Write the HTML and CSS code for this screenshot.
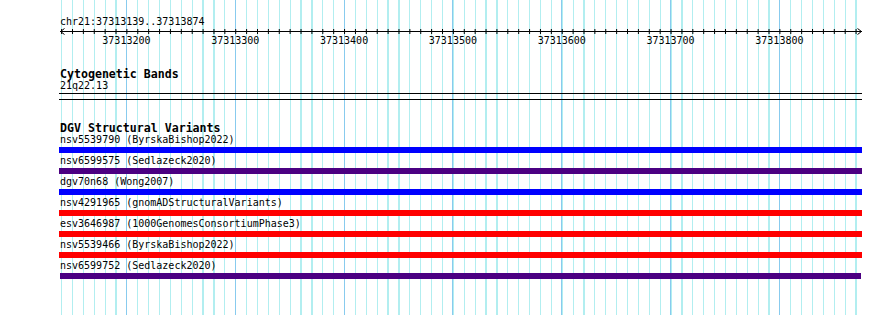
FILE: index.html
```html
<!DOCTYPE html>
<html lang="en">
<head>
  <meta charset="UTF-8" />
  <title>chr21:37313139..37313874</title>
  <link rel="stylesheet" href="styles.css">
</head>
<body>
  <div class="browser">
    <div class="ruler">
      <div class="position">chr21:37313139..37313874</div>
      <svg class="axis" width="803" height="7" viewBox="0 0 803 7">
        <defs>
          <pattern id="ticks" patternUnits="userSpaceOnUse" x="2.1" y="0" width="10.883" height="7">
            <rect x="0" y="1" width="1" height="5" fill="#000"/>
          </pattern>
        </defs>
        <rect x="0" y="0" width="803" height="7" fill="url(#ticks)"/>
        <line x1="1" y1="3.5" x2="803" y2="3.5" stroke="#000" stroke-width="1"/>
        <polyline points="5.5,0.5 1.5,3.5 5.5,6.5" fill="none" stroke="#000" stroke-width="1"/>
        <polyline points="798.5,0.5 802.5,3.5 798.5,6.5" fill="none" stroke="#000" stroke-width="1"/>
      </svg>
      <div class="scale">
        <span>37313200</span>
        <span>37313300</span>
        <span>37313400</span>
        <span>37313500</span>
        <span>37313600</span>
        <span>37313700</span>
        <span>37313800</span>
      </div>
    </div>

    <div class="track">
      <div class="track-title">Cytogenetic Bands</div>
      <div class="label">21q22.13</div>
      <div class="band"></div>
    </div>

    <div class="track dgv">
      <div class="track-title">DGV Structural Variants</div>
      <div class="variant">
        <div class="label">nsv5539790 (ByrskaBishop2022)</div>
        <div class="bar gain"></div>
      </div>
      <div class="variant">
        <div class="label">nsv6599575 (Sedlazeck2020)</div>
        <div class="bar complex"></div>
      </div>
      <div class="variant">
        <div class="label">dgv70n68 (Wong2007)</div>
        <div class="bar gain"></div>
      </div>
      <div class="variant">
        <div class="label">nsv4291965 (gnomADStructuralVariants)</div>
        <div class="bar loss"></div>
      </div>
      <div class="variant">
        <div class="label">esv3646987 (1000GenomesConsortiumPhase3)</div>
        <div class="bar loss"></div>
      </div>
      <div class="variant">
        <div class="label">nsv5539466 (ByrskaBishop2022)</div>
        <div class="bar loss"></div>
      </div>
      <div class="variant">
        <div class="label">nsv6599752 (Sedlazeck2020)</div>
        <div class="bar complex" style="margin-left: 1px; margin-right: 1px;"></div>
      </div>
    </div>
  </div>
</body>
</html>
```

FILE: styles.css
```css
body {
  margin: 0;
  padding: 0;
  background-color: #fff;
  color: #000;
  font-family: "DejaVu Sans Mono", monospace;
  font-size: 10px;
}

.browser {
  margin-left: 59px;
  width: 803px;
  height: 315px;
  padding-top: 16px;
  box-sizing: border-box;
  background-image:
    repeating-linear-gradient(to right, transparent 0 67px, #88cbee 67px 68px, transparent 68px 108.83px),
    repeating-linear-gradient(to right, transparent 0 2px, #b2eef0 2px 3.2px, transparent 3.2px 10.883px);
}

.position {
  line-height: 12px;
  padding-left: 1px;
}

.axis {
  display: block;
}

.scale {
  display: flex;
  margin-left: 13px;
  line-height: 11px;
}

.scale span {
  width: 108.83px;
  flex: none;
  text-align: center;
}

.track-title {
  margin-top: 22px;
  padding-left: 1px;
  font-size: 11.6px;
  font-weight: bold;
  line-height: 12px;
}

.label {
  line-height: 12px;
  padding-left: 1px;
  white-space: nowrap;
}

.band {
  margin-top: 1px;
  height: 5px;
  border-top: 1px solid #000;
  border-bottom: 1px solid #000;
}

.variant {
  margin-bottom: 2px;
}

.bar {
  margin-top: 1px;
  height: 6px;
}

.bar.gain {
  background-color: #0000ff;
}

.bar.loss {
  background-color: #ff0000;
}

.bar.complex {
  background-color: #4b0082;
}
```
